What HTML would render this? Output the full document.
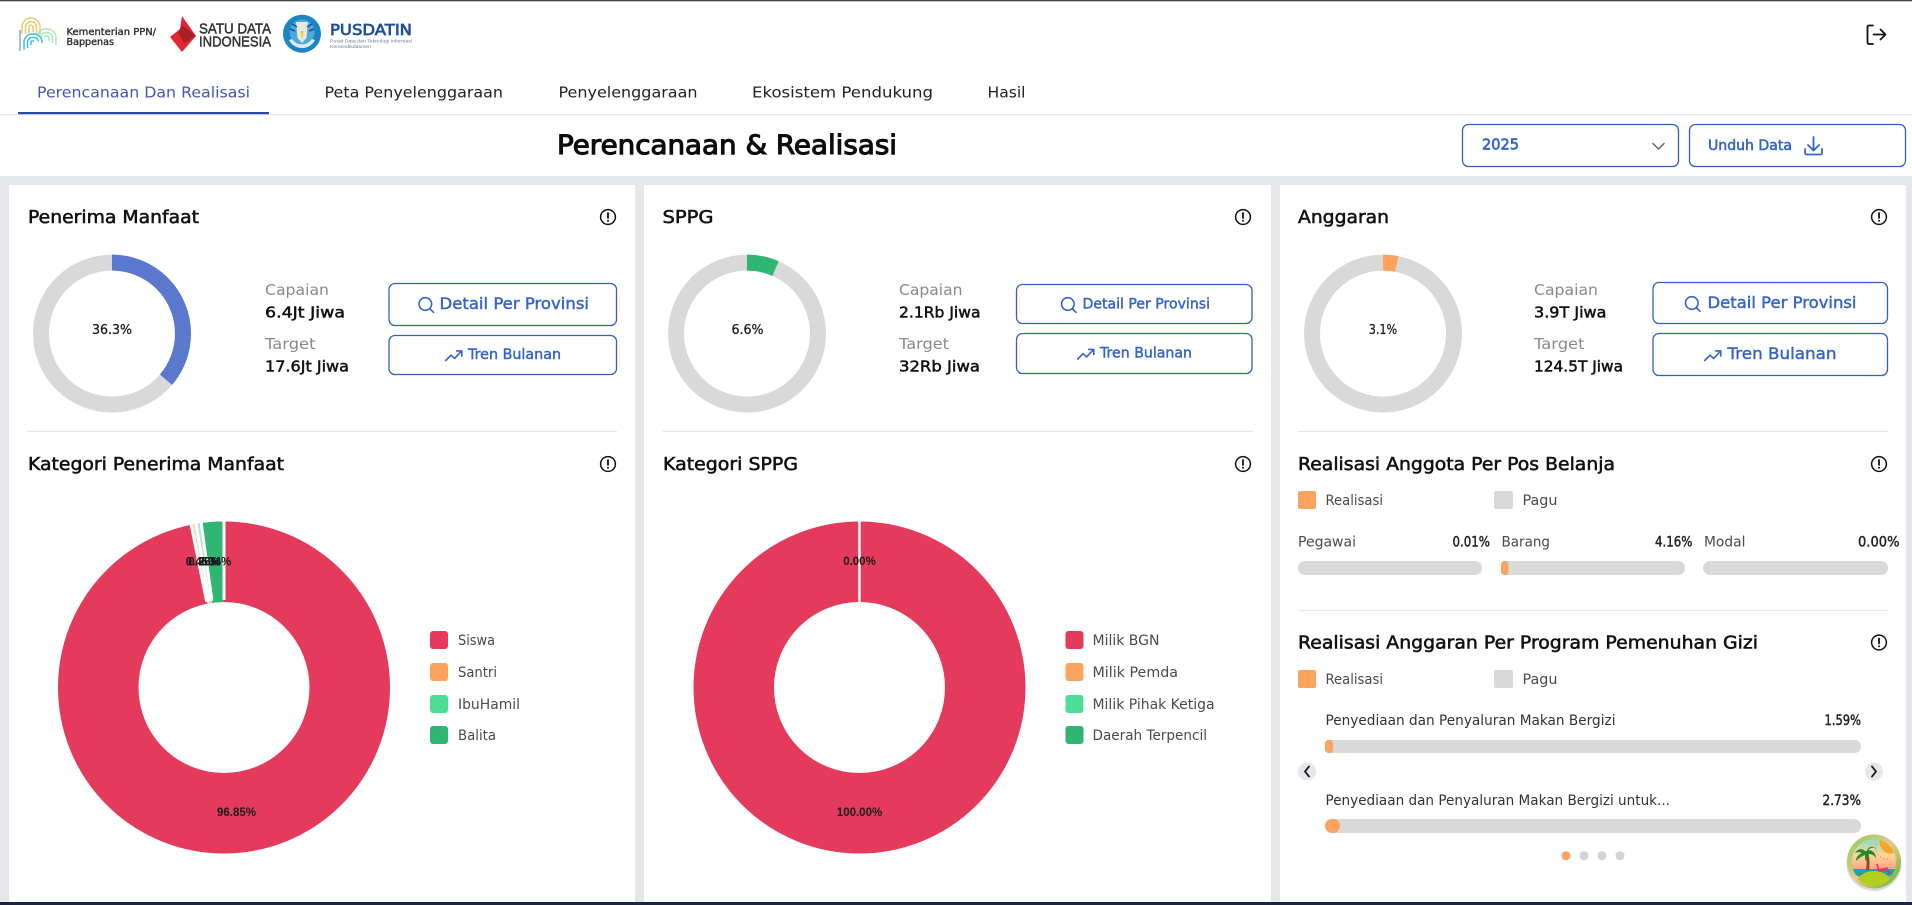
<!DOCTYPE html>
<html lang="id"><head><meta charset="utf-8"><title>Perencanaan &amp; Realisasi</title>
<style>
html,body{margin:0;padding:0;background:#e5e7eb;width:1912px;height:905px;overflow:hidden}
svg{display:block}
text{font-family:"DejaVu Sans","Liberation Sans",sans-serif;white-space:pre}
.h{font-size:18px;fill:#111;stroke:#111;stroke-width:.55}
.tab{font-size:15.5px;fill:#222}
.g{font-size:15.5px;fill:#8a8a8a}
.v{font-size:15.5px;fill:#111;stroke:#111;stroke-width:.5}
.p{font-size:13.5px;fill:#222;stroke:#222;stroke-width:.3}
.b{font-size:15px;fill:#3565c8;stroke:#3565c8;stroke-width:.45}
.l{font-size:14px;fill:#4a4a4a}
.s{font-size:14px;fill:#222;stroke:#222;stroke-width:.45}
.d{font-family:"Liberation Sans",Arial,sans-serif;font-weight:700;font-size:11.5px;fill:#1a1a1a;text-anchor:middle}
.btn{fill:#fff;stroke:#2f62bd;stroke-width:1.3}
.ic{fill:none;stroke:#3565c8;stroke-width:1.6;stroke-linecap:round;stroke-linejoin:round}
.div{stroke:#e5e7eb;stroke-width:1.2}
</style></head><body>
<svg xmlns="http://www.w3.org/2000/svg" width="1912" height="905" viewBox="0 0 1912 905">
<defs>
<g id="info"><circle cx="0" cy="0" r="7.4" fill="none" stroke="#111" stroke-width="1.5"/><path d="M0-4V1" stroke="#111" stroke-width="1.8" stroke-linecap="round"/><circle cx="0" cy="3.7" r="1" fill="#111"/></g>
<g id="search"><circle cx="7.3" cy="7" r="6.3" class="ic"/><path d="M12 12L15.5 15.3" class="ic"/></g>
<path id="trend" d="M.7 10.5L6 5.2 9.6 8.4 16.5 1.2M11.6.9H16.8V6" class="ic"/>
<linearGradient id="sky" x1="0" y1="0" x2="0" y2="1"><stop offset="0" stop-color="#8fdcc8"/><stop offset=".35" stop-color="#fcd79a"/><stop offset=".75" stop-color="#fb9a80"/><stop offset="1" stop-color="#fb8f80"/></linearGradient>
<linearGradient id="ring" x1="0" y1="0" x2="1" y2="1"><stop offset="0" stop-color="#86cf56"/><stop offset=".5" stop-color="#e9c98c"/><stop offset="1" stop-color="#58b52c"/></linearGradient>
</defs>

<!-- Header -->
<rect width="1912" height="176" fill="#fff"/>
<rect width="1912" height="1.3" fill="#444"/>

<!-- Bappenas logo -->
<g fill="none" stroke-width="1.5">
<g stroke="#efc672"><path d="M22 34V27a9 9 0 0 1 18 0v7"/><path d="M25.500 34V27a5.500 5.500 0 0 1 11 0v6"/><path d="M29 33V27a2 2 0 0 1 4 0v5"/></g>
<g stroke="#a7ebb9"><path d="M37 38a9 9 0 0 1 9-9h1a9 9 0 0 1 9 9v7"/><path d="M40.500 38a5.500 5.500 0 0 1 5.500-5.500h1a5.500 5.500 0 0 1 5.500 5.500v5"/><path d="M44 37a2 2 0 0 1 2-1h1a2 2 0 0 1 2 2v3"/></g>
<g stroke="#3fc4dc"><path d="M24 50V42a8 8 0 0 1 8-8h2a8 8 0 0 1 8 8v1"/><path d="M27.500 48V42a4.500 4.500 0 0 1 4.500-4.500h2a4.500 4.500 0 0 1 4.500 4"/><path d="M31 45V42a1 1 0 0 1 1-1h2"/></g>
<path d="M20 30V51" stroke="#8aa8c8"/>
</g>
<text x="66.500" y="35" font-size="10" fill="#2b2b2b" stroke="#2b2b2b" stroke-width=".35" textLength="89.500" lengthAdjust="spacingAndGlyphs">Kementerian PPN/</text>
<text x="66.500" y="45" font-size="10" fill="#2b2b2b" stroke="#2b2b2b" stroke-width=".35" textLength="47.500" lengthAdjust="spacingAndGlyphs">Bappenas</text>

<!-- Satu Data logo -->
<path d="M182 16L196 36 182 52 170 37 180 29Z" fill="#e32731"/><path d="M182 25L196 36 184 43 178 33Z" fill="#a81f26"/>
<text x="199" y="33.500" style="font-family:'Liberation Sans',sans-serif" font-size="15" font-weight="400" stroke="#333" stroke-width=".5" fill="#333" textLength="72" lengthAdjust="spacingAndGlyphs">SATU DATA</text>
<text x="199" y="46.500" style="font-family:'Liberation Sans',sans-serif" font-size="15" font-weight="400" stroke="#333" stroke-width=".5" fill="#333" textLength="72" lengthAdjust="spacingAndGlyphs">INDONESIA</text>

<!-- Tut Wuri logo -->
<circle cx="302" cy="33.700" r="19" fill="#1b84c6"/><circle cx="302" cy="32" r="12.500" fill="#4fa9d9"/>
<path d="M296 22h12l-1.500 16-4.500 5-4.500-5z" fill="#e9e9dc"/><path d="M300.500 31h3l-1.500 10z" fill="#f0c92f"/>
<path d="M289 40a14.500 14.500 0 0 0 26 0l-3-1a12 12 0 0 1-20 0z" fill="#fff" opacity=".85"/>
<path d="M292 24l5 3M312 24l-5 3M290 29l5 2M314 29l-5 2" stroke="#1c4f8f" stroke-width="1.500"/>

<!-- Pusdatin logo -->
<text x="330" y="35" font-size="15" stroke="#1f4f9e" stroke-width=".7" fill="#1f4f9e" textLength="82" lengthAdjust="spacingAndGlyphs">PUSDATIN</text>
<text x="330" y="42.500" style="font-family:'Liberation Sans',sans-serif" font-size="4.500" fill="#6b7a99" textLength="82" lengthAdjust="spacingAndGlyphs">Pusat Data dan Teknologi Informasi</text>
<text x="330" y="48" style="font-family:'Liberation Sans',sans-serif" font-size="4.500" fill="#6b7a99" textLength="41" lengthAdjust="spacingAndGlyphs">Kemendikdasmen</text>

<!-- Logout -->
<path d="M1873 25.500h-4a1.500 1.500 0 0 0-1.500 1.500v15.500a1.500 1.500 0 0 0 1.500 1.500h4" fill="none" stroke="#111" stroke-width="1.800" stroke-linecap="round"/>
<path d="M1873.500 34.500H1885.500M1880.500 29.500l5 5-5 5" fill="none" stroke="#111" stroke-width="1.800" stroke-linecap="round" stroke-linejoin="round"/>

<!-- Tabs -->
<text x="37" y="97.500" class="tab" style="fill:#4456ad" textLength="213" lengthAdjust="spacingAndGlyphs">Perencanaan Dan Realisasi</text>
<text x="324.500" y="97.500" class="tab" textLength="178.500" lengthAdjust="spacingAndGlyphs">Peta Penyelenggaraan</text>
<text x="558.500" y="97.500" class="tab" textLength="139" lengthAdjust="spacingAndGlyphs">Penyelenggaraan</text>
<text x="752" y="97.500" class="tab" textLength="181" lengthAdjust="spacingAndGlyphs">Ekosistem Pendukung</text>
<text x="987.500" y="97.500" class="tab" textLength="38" lengthAdjust="spacingAndGlyphs">Hasil</text>
<rect x="0" y="114" width="1912" height="1.200" fill="#e5e7eb"/>
<rect x="18" y="112" width="251" height="2.200" fill="#2b4aa6"/>

<!-- Page title and controls -->
<text x="557" y="154" font-size="27" fill="#0d0d0d" stroke="#0d0d0d" stroke-width="1.100" textLength="340" lengthAdjust="spacingAndGlyphs">Perencanaan &amp; Realisasi</text>
<rect x="1462.500" y="124.500" width="216" height="42" rx="6" class="btn"/>
<text x="1482" y="149.500" font-size="15.500" fill="#3565c8" stroke="#3565c8" stroke-width=".7" textLength="37" lengthAdjust="spacingAndGlyphs">2025</text>
<path d="M1653 143.500l5.500 5.500 5.500-5.500" fill="none" stroke="#666" stroke-width="1.500" stroke-linecap="round" stroke-linejoin="round"/>
<rect x="1689.500" y="124.500" width="216" height="42" rx="6" class="btn"/>
<text x="1708" y="150" class="b" style="font-size:14px;stroke-width:.55" textLength="84" lengthAdjust="spacingAndGlyphs">Unduh Data</text>
<path d="M1813.500 137V150M1808 145l5.500 5.500 5.500-5.500M1805 149v4a1.500 1.500 0 0 0 1.500 1.500h14a1.500 1.500 0 0 0 1.500-1.500v-4" class="ic" style="stroke-width:1.800"/>

<!-- Cards -->
<rect x="9" y="185" width="626" height="717" fill="#fff"/>
<rect x="644" y="185" width="627" height="717" fill="#fff"/>
<rect x="1280" y="185" width="626" height="717" fill="#fff"/>
<rect x="0" y="902" width="1912" height="3" fill="#1c2540"/>

<!-- Card 1 -->
<text x="28" y="223" class="h" textLength="171" lengthAdjust="spacingAndGlyphs">Penerima Manfaat</text>
<use href="#info" x="608" y="217"/>
<circle cx="112" cy="333.600" r="71" fill="none" stroke="#d9d9d9" stroke-width="16"/>
<circle cx="112" cy="333.600" r="71" fill="none" stroke="#5b78cf" stroke-width="16" pathLength="100" stroke-dasharray="36.300 100" transform="rotate(-90 112 333.600)"/>
<text x="92" y="334" class="p" textLength="40" lengthAdjust="spacingAndGlyphs">36.3%</text>
<text x="265" y="295" class="g" textLength="64" lengthAdjust="spacingAndGlyphs">Capaian</text>
<text x="265" y="317.500" class="v" textLength="80" lengthAdjust="spacingAndGlyphs">6.4Jt Jiwa</text>
<text x="265" y="349" class="g" textLength="50.500" lengthAdjust="spacingAndGlyphs">Target</text>
<text x="265" y="371.500" class="v" textLength="84" lengthAdjust="spacingAndGlyphs">17.6Jt Jiwa</text>
<rect x="389" y="283.500" width="227.500" height="42" rx="6" class="btn"/>
<use href="#search" x="418" y="297"/>
<text x="439.500" y="309" class="b" style="font-size:16px" textLength="149.500" lengthAdjust="spacingAndGlyphs">Detail Per Provinsi</text>
<rect x="389" y="335.500" width="227.500" height="39" rx="6" class="btn"/>
<use href="#trend" x="445" y="350"/>
<text x="468" y="359" class="b" style="font-size:14.500px" textLength="93" lengthAdjust="spacingAndGlyphs">Tren Bulanan</text>
<line x1="27" y1="431.500" x2="617" y2="431.500" class="div"/>
<text x="28" y="470" class="h" textLength="256" lengthAdjust="spacingAndGlyphs">Kategori Penerima Manfaat</text>
<use href="#info" x="608" y="464"/>
<g fill="none" stroke-width="80.500">
<circle cx="224" cy="687.500" r="125.750" stroke="#e43a5c"/>
<circle cx="224" cy="687.500" r="125.750" stroke="#fbd3b2" pathLength="100" stroke-dasharray=".47 100" stroke-dashoffset="-96.830" transform="rotate(-90 224 687.500)"/>
<circle cx="224" cy="687.500" r="125.750" stroke="#a8eecb" pathLength="100" stroke-dasharray=".5 100" stroke-dashoffset="-97.300" transform="rotate(-90 224 687.500)"/>
<circle cx="224" cy="687.500" r="125.750" stroke="#2fb673" pathLength="100" stroke-dasharray="2.200 100" stroke-dashoffset="-97.800" transform="rotate(-90 224 687.500)"/>
</g>
<g stroke="#fff" stroke-width="3">
<line x1="224" y1="600" x2="224" y2="520" />
<line x1="224" y1="600" x2="224" y2="520" transform="rotate(-11.400 224 687.500)"/>
<line x1="224" y1="600" x2="224" y2="520" transform="rotate(-9.700 224 687.500)"/>
<line x1="224" y1="600" x2="224" y2="520" transform="rotate(-7.900 224 687.500)"/>
</g>
<text x="202" y="565.500" class="d">0.45%</text><text x="204.500" y="565.500" class="d">0.36%</text><text x="215" y="565.500" class="d">2.34%</text>
<text x="236.500" y="816" class="d">96.85%</text>
<rect x="430" y="631" width="18" height="18" rx="3" fill="#e43a5c"/><text x="458" y="645" class="l" textLength="37" lengthAdjust="spacingAndGlyphs">Siswa</text>
<rect x="430" y="663" width="18" height="18" rx="3" fill="#fba35f"/><text x="458" y="677" class="l" textLength="39" lengthAdjust="spacingAndGlyphs">Santri</text>
<rect x="430" y="695" width="18" height="18" rx="3" fill="#4edd96"/><text x="458" y="709" class="l" textLength="62" lengthAdjust="spacingAndGlyphs">IbuHamil</text>
<rect x="430" y="726" width="18" height="18" rx="3" fill="#2fb673"/><text x="458" y="740" class="l" textLength="38" lengthAdjust="spacingAndGlyphs">Balita</text>

<!-- Card 2 -->
<text x="662.500" y="223" class="h" textLength="51" lengthAdjust="spacingAndGlyphs">SPPG</text>
<use href="#info" x="1243" y="217"/>
<circle cx="747" cy="333.600" r="71" fill="none" stroke="#d9d9d9" stroke-width="16"/>
<circle cx="747" cy="333.600" r="71" fill="none" stroke="#2fb673" stroke-width="16" pathLength="100" stroke-dasharray="6.600 100" transform="rotate(-90 747 333.600)"/>
<text x="731.500" y="334" class="p" textLength="32" lengthAdjust="spacingAndGlyphs">6.6%</text>
<text x="899" y="295" class="g" textLength="63.500" lengthAdjust="spacingAndGlyphs">Capaian</text>
<text x="899" y="317.500" class="v" textLength="81.500" lengthAdjust="spacingAndGlyphs">2.1Rb Jiwa</text>
<text x="899" y="349" class="g" textLength="50" lengthAdjust="spacingAndGlyphs">Target</text>
<text x="899" y="371.500" class="v" textLength="81" lengthAdjust="spacingAndGlyphs">32Rb Jiwa</text>
<rect x="1016.500" y="284.500" width="235.500" height="39" rx="6" class="btn"/>
<use href="#search" x="1060.500" y="297"/>
<text x="1082.500" y="308.500" class="b" style="font-size:14.500px" textLength="127.500" lengthAdjust="spacingAndGlyphs">Detail Per Provinsi</text>
<rect x="1016.500" y="333.500" width="235.500" height="40" rx="6" class="btn"/>
<use href="#trend" x="1077" y="348.500"/>
<text x="1100" y="357.500" class="b" style="font-size:14.500px" textLength="92" lengthAdjust="spacingAndGlyphs">Tren Bulanan</text>
<line x1="662.500" y1="431.500" x2="1253" y2="431.500" class="div"/>
<text x="663" y="470" class="h" textLength="135" lengthAdjust="spacingAndGlyphs">Kategori SPPG</text>
<use href="#info" x="1243" y="464"/>
<circle cx="859.500" cy="687.500" r="125.750" fill="none" stroke="#e43a5c" stroke-width="80.500"/>
<line x1="859.500" y1="602" x2="859.500" y2="520" stroke="#fff" stroke-width="2.500"/>
<text x="859.500" y="565" class="d">0.00%</text>
<text x="859.500" y="816" class="d">100.00%</text>
<rect x="1065.500" y="631" width="18" height="18" rx="3" fill="#e43a5c"/><text x="1092.500" y="645" class="l" textLength="67" lengthAdjust="spacingAndGlyphs">Milik BGN</text>
<rect x="1065.500" y="663" width="18" height="18" rx="3" fill="#fba35f"/><text x="1092.500" y="677" class="l" textLength="85.500" lengthAdjust="spacingAndGlyphs">Milik Pemda</text>
<rect x="1065.500" y="695" width="18" height="18" rx="3" fill="#4edd96"/><text x="1092.500" y="709" class="l" textLength="122" lengthAdjust="spacingAndGlyphs">Milik Pihak Ketiga</text>
<rect x="1065.500" y="726" width="18" height="18" rx="3" fill="#2fb673"/><text x="1092.500" y="740" class="l" textLength="114.500" lengthAdjust="spacingAndGlyphs">Daerah Terpencil</text>

<!-- Card 3 -->
<text x="1298" y="223" class="h" textLength="91" lengthAdjust="spacingAndGlyphs">Anggaran</text>
<use href="#info" x="1879" y="217"/>
<circle cx="1383" cy="333.600" r="71" fill="none" stroke="#d9d9d9" stroke-width="16"/>
<circle cx="1383" cy="333.600" r="71" fill="none" stroke="#fba35f" stroke-width="16" pathLength="100" stroke-dasharray="3.100 100" transform="rotate(-90 1383 333.600)"/>
<text x="1368.700" y="334" class="p" textLength="28.500" lengthAdjust="spacingAndGlyphs">3.1%</text>
<text x="1534" y="295" class="g" textLength="64" lengthAdjust="spacingAndGlyphs">Capaian</text>
<text x="1534" y="317.500" class="v" textLength="72.500" lengthAdjust="spacingAndGlyphs">3.9T Jiwa</text>
<text x="1534" y="349" class="g" textLength="50.500" lengthAdjust="spacingAndGlyphs">Target</text>
<text x="1534" y="371.500" class="v" textLength="89" lengthAdjust="spacingAndGlyphs">124.5T Jiwa</text>
<rect x="1653" y="282.500" width="234.500" height="41" rx="6" class="btn"/>
<use href="#search" x="1684.500" y="296"/>
<text x="1707.500" y="308" class="b" style="font-size:16px" textLength="149" lengthAdjust="spacingAndGlyphs">Detail Per Provinsi</text>
<rect x="1653" y="333.500" width="234.500" height="42" rx="6" class="btn"/>
<use href="#trend" x="1704" y="350"/>
<text x="1727.500" y="359" class="b" style="font-size:16px" textLength="109" lengthAdjust="spacingAndGlyphs">Tren Bulanan</text>
<line x1="1298" y1="431.500" x2="1888" y2="431.500" class="div"/>
<text x="1298" y="470" class="h" textLength="317" lengthAdjust="spacingAndGlyphs">Realisasi Anggota Per Pos Belanja</text>
<use href="#info" x="1879" y="464"/>
<rect x="1298" y="491" width="18" height="18" rx="2" fill="#fba35f"/><text x="1325.500" y="505" class="l" textLength="57.500" lengthAdjust="spacingAndGlyphs">Realisasi</text>
<rect x="1494" y="491" width="19" height="18" rx="2" fill="#d9d9d9"/><text x="1522.500" y="505" class="l" textLength="35" lengthAdjust="spacingAndGlyphs">Pagu</text>
<text x="1298" y="546.500" class="l" textLength="58" lengthAdjust="spacingAndGlyphs">Pegawai</text>
<text x="1452.500" y="546.500" class="s" textLength="37.500" lengthAdjust="spacingAndGlyphs">0.01%</text>
<text x="1501.500" y="546.500" class="l" textLength="48.500" lengthAdjust="spacingAndGlyphs">Barang</text>
<text x="1655" y="546.500" class="s" textLength="37.500" lengthAdjust="spacingAndGlyphs">4.16%</text>
<text x="1704" y="546.500" class="l" textLength="41.500" lengthAdjust="spacingAndGlyphs">Modal</text>
<text x="1858" y="546.500" class="s" textLength="41.500" lengthAdjust="spacingAndGlyphs">0.00%</text>
<rect x="1298" y="561" width="184" height="14" rx="7" fill="#d9d9d9"/>
<rect x="1501" y="561" width="184" height="14" rx="7" fill="#d9d9d9"/>
<rect x="1501" y="561" width="7.500" height="14" rx="3.500" fill="#fba35f"/>
<rect x="1703" y="561" width="185" height="14" rx="7" fill="#d9d9d9"/>
<line x1="1298" y1="610.500" x2="1888" y2="610.500" class="div"/>
<text x="1298" y="648.500" class="h" textLength="460" lengthAdjust="spacingAndGlyphs">Realisasi Anggaran Per Program Pemenuhan Gizi</text>
<use href="#info" x="1879" y="642.500"/>
<rect x="1298" y="670" width="18" height="18" rx="2" fill="#fba35f"/><text x="1325.500" y="684" class="l" textLength="57.500" lengthAdjust="spacingAndGlyphs">Realisasi</text>
<rect x="1494" y="670" width="19" height="18" rx="2" fill="#d9d9d9"/><text x="1522.500" y="684" class="l" textLength="35" lengthAdjust="spacingAndGlyphs">Pagu</text>
<text x="1325.500" y="725" class="l" style="fill:#333" textLength="290" lengthAdjust="spacingAndGlyphs">Penyediaan dan Penyaluran Makan Bergizi</text>
<text x="1824.500" y="725" class="s" textLength="36.500" lengthAdjust="spacingAndGlyphs">1.59%</text>
<rect x="1325" y="740" width="536" height="13" rx="6.500" fill="#d9d9d9"/>
<rect x="1325" y="740" width="8" height="13" rx="3.500" fill="#fba35f"/>
<circle cx="1307" cy="771.500" r="9" fill="#e5e7eb"/><path d="M1309 766.500l-4 5 4 5" fill="none" stroke="#111" stroke-width="1.800" stroke-linecap="round" stroke-linejoin="round"/>
<circle cx="1874" cy="771.500" r="9" fill="#e5e7eb"/><path d="M1872 766.500l4 5-4 5" fill="none" stroke="#111" stroke-width="1.800" stroke-linecap="round" stroke-linejoin="round"/>
<text x="1325.500" y="805" class="l" style="fill:#333" textLength="344.500" lengthAdjust="spacingAndGlyphs">Penyediaan dan Penyaluran Makan Bergizi untuk...</text>
<text x="1822.500" y="805" class="s" textLength="38.500" lengthAdjust="spacingAndGlyphs">2.73%</text>
<rect x="1325" y="819" width="536" height="14" rx="7" fill="#d9d9d9"/>
<rect x="1325" y="819" width="15" height="14" rx="7" fill="#fba35f"/>
<circle cx="1566" cy="855.700" r="4.500" fill="#fba35f"/>
<circle cx="1584" cy="855.700" r="4.500" fill="#d1d5db"/>
<circle cx="1602" cy="855.700" r="4.500" fill="#d1d5db"/>
<circle cx="1620" cy="855.700" r="4.500" fill="#d1d5db"/>

<!-- Floating beach badge -->
<circle cx="1874" cy="863.500" r="27.500" fill="#000" opacity=".14"/>
<circle cx="1874" cy="861.500" r="27" fill="url(#ring)"/>
<circle cx="1874" cy="861.500" r="22" fill="url(#sky)"/>
<path d="M1880 840a22 22 0 0 1 14 13 11 11 0 0 1-14-13z" fill="#f5a623"/>
<path d="M1876 844a12 12 0 0 0 14 15" fill="none" stroke="#f08a3c" stroke-width="1" stroke-dasharray="1.500 2"/>
<path d="M1853 869h42a22 22 0 0 1-3 6l-18 8-18-8a22 22 0 0 1-3-6z" fill="#23a0aa"/>
<path d="M1858 879a17 12 0 0 1 32 0 22 22 0 0 1-32 0z" fill="#b3cf1d"/>
<path d="M1866 870c1-7 1-13-.5-19h2.500c1.500 6 2 12 1 19z" fill="#8b4a20"/>
<path d="M1866 852c-3-4-8-4-11 1 3-1 5-1 7 0-3 1-6 4-6 8 3-3 6-5 9-6 0 3 0 5 1 6 2-2 3-5 2-7 3 0 6 1 8 4 0-5-4-8-8-8 2-2 5-3 7-2-3-3-7-1-9 4z" fill="#2a8a2a"/>
<path d="M1877 864l2 7h9l2 3M1878 870l10-2" fill="none" stroke="#e0336a" stroke-width="1.600"/>
</svg>
</body></html>
